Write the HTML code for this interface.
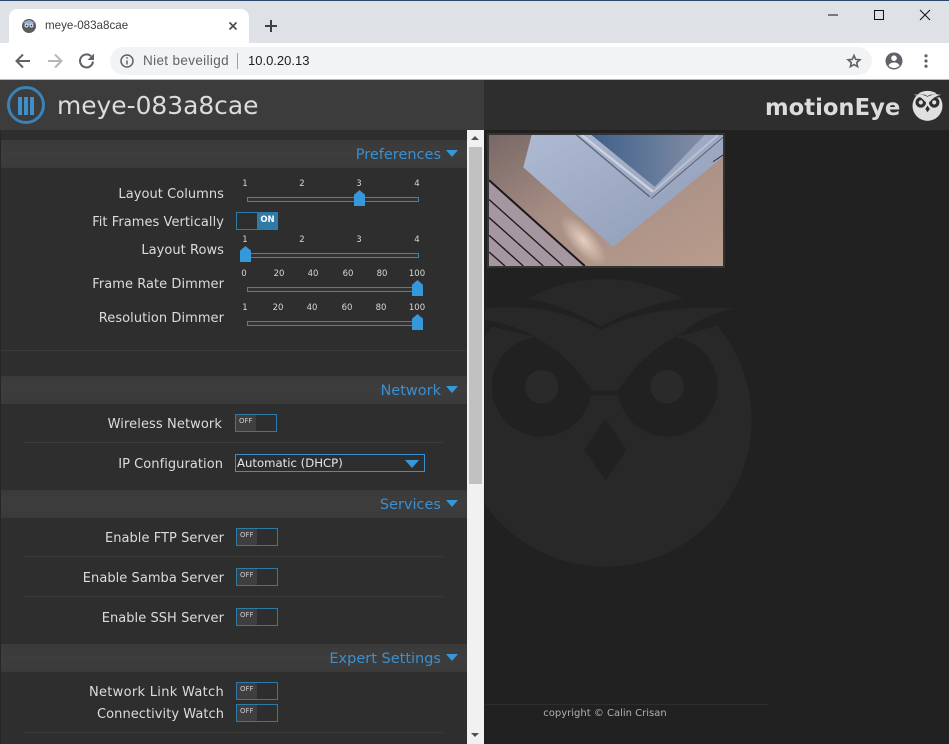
<!DOCTYPE html>
<html><head><meta charset="utf-8"><title>meye-083a8cae</title>
<style>
html,body{margin:0;padding:0;background:#212121}
body{width:949px;height:744px;position:relative;overflow:hidden;font-family:"DejaVu Sans",sans-serif}
div,span,svg{position:absolute;display:block}
.h{left:1px;width:466px;height:28px;background:linear-gradient(#3a3a3a,#3d3d3d 50%,#3a3a3a)}
.ht{right:508px;height:28px;line-height:31px;font-size:14.5px;color:#3a8fd0;white-space:nowrap;width:auto}
.tri{left:446px;width:0;height:0;border-left:6.5px solid transparent;border-right:6.5px solid transparent;border-top:7.5px solid #3498db}
.l{right:725px;height:20px;line-height:20px;font-size:13px;color:#dcdcdc;white-space:nowrap;letter-spacing:.05px}
.sep{height:1px;left:24px;width:419px;background:#3c3c3c}
.tr{left:247px;width:170px;height:3px;border:1px solid #3a85b8;background:#333}
.th{width:11px;height:16px;background:#3498db;clip-path:polygon(50% 0,100% 30%,100% 100%,0 100%,0 30%)}
.tk{font-size:8.5px;line-height:10px;color:#d8d8d8;width:30px;text-align:center}
.tg{width:40px;height:16px;border:1px solid #317aa8;background:#2e2e2e}
.tg i{position:absolute;left:0;top:0;width:20px;height:16px;background:#3f3f3f;color:#ccc;font:normal 7px/13px "DejaVu Sans",sans-serif;text-indent:3px}
</style></head><body>

<!-- browser chrome -->
<div style="left:0;top:0;width:949px;height:1px;background:#2c4667"></div>
<div style="left:0;top:1px;width:949px;height:42px;background:#dee1e6"></div>
<div style="left:9px;top:9px;width:240px;height:34px;background:#fff;border-radius:8px 8px 0 0"></div>
<div style="left:0;top:43px;width:949px;height:36px;background:#fff"></div>
<div style="left:0;top:79px;width:949px;height:1px;background:#b8b8b8"></div>
<div style="left:110px;top:47px;width:762px;height:28px;border-radius:14px;background:#f1f3f4"></div>
<div style="left:45px;top:18px;font:11.6px/16px 'Liberation Sans',sans-serif;color:#3c4043;white-space:nowrap">meye-083a8cae</div>
<div style="left:143px;top:53px;font:13.5px/16px 'Liberation Sans',sans-serif;color:#5f6368;white-space:nowrap;letter-spacing:.35px">Niet beveiligd</div>
<div style="left:237px;top:53px;width:1px;height:16px;background:#9aa0a6"></div>
<div style="left:248px;top:53px;font:13px/16px 'Liberation Sans',sans-serif;color:#202124;white-space:nowrap">10.0.20.13</div>

<svg style="left:0;top:0" width="949" height="80" viewBox="0 0 949 80">
 <!-- favicon -->
 <circle cx="29" cy="26" r="7" fill="#5b5b5b"/>
 <path d="M23.5 23Q29 17.5 34.5 23L29 25Z" fill="#8fb0d8"/>
 <circle cx="26.5" cy="25.5" r="2" fill="#dfe6f2"/><circle cx="31.5" cy="25.5" r="2" fill="#dfe6f2"/>
 <circle cx="26.5" cy="25.5" r=".9" fill="#333"/><circle cx="31.5" cy="25.5" r=".9" fill="#333"/>
 <!-- tab close / new tab -->
 <path d="M229.5 22.5l7 7m0-7l-7 7" stroke="#45494d" stroke-width="1.6" fill="none"/>
 <path d="M271 20v12M265 26h12" stroke="#3c4043" stroke-width="2" fill="none"/>
 <!-- nav -->
 <path d="M30 61H17M23 54.5L16.5 61l6.500 6.500" stroke="#5f6368" stroke-width="2" fill="none"/>
 <path d="M48 61h13M55 54.5L61.5 61 55 67.5" stroke="#b4b7ba" stroke-width="2" fill="none"/>
 <path d="M93 61.5a6.500 6.500 0 1 1-1.900-5.200" stroke="#5f6368" stroke-width="2" fill="none"/>
 <path d="M94 53.5v6.500h-6.500z" fill="#5f6368"/>
 <circle cx="127" cy="61" r="6" stroke="#5f6368" stroke-width="1.5" fill="none"/>
 <path d="M127 60.5v4M127 57.2v1.500" stroke="#5f6368" stroke-width="1.5"/>
 <!-- star -->
 <path d="M854 55.5l1.700 3.900 4.200.4-3.200 2.800.9 4.100-3.600-2.100-3.600 2.100.9-4.100-3.200-2.800 4.200-.4z" stroke="#5f6368" stroke-width="1.6" fill="none"/>
 <!-- profile -->
 <circle cx="894" cy="61" r="8.5" fill="#5f6368"/>
 <circle cx="894" cy="58.2" r="2.8" fill="#fff"/>
 <path d="M888.5 65.5c1-2.200 3.200-3 5.500-3s4.500.8 5.500 3c-1.300 1.600-3.300 2.500-5.500 2.500s-4.200-.9-5.500-2.500z" fill="#fff"/>
 <!-- dots -->
 <circle cx="926" cy="55.8" r="1.6" fill="#5f6368"/><circle cx="926" cy="61" r="1.6" fill="#5f6368"/><circle cx="926" cy="66.2" r="1.6" fill="#5f6368"/>
 <!-- window controls -->
 <path d="M828 15h10" stroke="#111" stroke-width="1" fill="none"/>
 <rect x="874.5" y="10.5" width="9" height="9" stroke="#111" stroke-width="1" fill="none"/>
 <path d="M920 10l10 10m0-10l-10 10" stroke="#111" stroke-width="1" fill="none"/>
</svg>

<!-- page -->
<div style="left:0;top:80px;width:484px;height:50px;background:#3c3c3c"></div>
<div style="left:484px;top:80px;width:465px;height:50px;background:#2e2e2e"></div>
<div style="left:484px;top:130px;width:465px;height:614px;background:#212121"></div>

<svg style="left:7px;top:86px" width="38" height="38" viewBox="0 0 38 38">
 <circle cx="19" cy="19" r="17.5" stroke="#3a82b8" stroke-width="3" fill="none"/>
 <rect x="11" y="11" width="4" height="18" fill="#3f8fca"/><rect x="17" y="11" width="4" height="18" fill="#3f8fca"/><rect x="23" y="11" width="4" height="18" fill="#3f8fca"/>
</svg>
<div style="left:57px;top:89px;font-size:24.9px;line-height:34px;color:#dcdcdc;white-space:nowrap">meye-083a8cae</div>
<div style="left:765px;top:91px;font-size:22.7px;line-height:34px;font-weight:bold;color:#dcdcdc;white-space:nowrap">motionEye</div>

<svg style="left:912px;top:90px" width="31" height="31" viewBox="-10 0 880 880">
 <circle cx="430" cy="450" r="425" fill="#e0e0e0"/>
 <path d="M-20 130H880V200L430 240Z" fill="#2e2e2e"/>
 <path d="M190 85Q430-30 670 85Q530 110 430 175Q330 110 190 85Z" fill="#e0e0e0"/>
 <circle cx="240" cy="350" r="150" fill="#2e2e2e"/><circle cx="620" cy="350" r="150" fill="#2e2e2e"/>
 <path d="M40 135Q280 110 430 190Q580 110 820 135Q620 170 470 360H390Q240 170 40 135Z" fill="#e0e0e0"/>
 <circle cx="240" cy="350" r="60" fill="#e0e0e0"/><circle cx="620" cy="350" r="60" fill="#e0e0e0"/>
 <path d="M430 445L495 540 430 630 368 540Z" fill="#2e2e2e"/>
</svg>

<!-- owl watermark -->
<svg style="left:485px;top:270px" width="300" height="300" viewBox="0 0 900 900">
 <circle cx="360" cy="450" r="440" fill="#282828"/>
 <path d="M-10 0H900V170L700 165 600 195 350 240 125 195 0 165Z" fill="#212121"/>
 <path d="M130 85Q350-30 595 85Q450 110 348 170Q250 110 130 85Z" fill="#282828"/>
 <circle cx="170" cy="350" r="150" fill="#212121"/><circle cx="548" cy="350" r="150" fill="#212121"/>
 <path d="M0 115Q200 95 348 180Q500 100 750 115Q650 135 590 190Q470 250 400 360H320Q250 250 130 190Q70 160 0 150Z" fill="#282828"/>
 <rect x="318" y="362" width="84" height="14" fill="#212121"/>
 <rect x="318" y="376" width="84" height="40" fill="#282828"/>
 <circle cx="170" cy="350" r="50" fill="#2a2a2a"/><circle cx="546" cy="350" r="50" fill="#2a2a2a"/>
 <path d="M360 445L425 540 362 632 298 540Z" fill="#212121"/>
</svg>

<!-- camera frame -->
<div style="left:487px;top:133px;width:238px;height:135px;background:#333"></div>
<svg style="left:489px;top:135px" width="234" height="131" viewBox="12 15 703 392" preserveAspectRatio="none">
 <defs>
  <linearGradient id="a" x1="0" y1="0" x2="1" y2="1"><stop offset="0" stop-color="#786866"/><stop offset=".45" stop-color="#a88f85"/><stop offset="1" stop-color="#b89c8c"/></linearGradient>
  <linearGradient id="b" x1="0" y1="0" x2="1" y2="1"><stop offset="0" stop-color="#aeb9d2"/><stop offset="1" stop-color="#8e9bb6"/></linearGradient>
  <linearGradient id="c" x1="0" y1="0" x2="1" y2="0"><stop offset="0" stop-color="#3f608a"/><stop offset="1" stop-color="#838ea6"/></linearGradient>
  <radialGradient id="g"><stop offset="0" stop-color="#e4cfbe"/><stop offset="1" stop-color="#e4cfbe" stop-opacity="0"/></radialGradient>
 </defs>
 <rect x="12" y="15" width="703" height="392" fill="url(#a)"/>
 <path d="M115 112L140 15H715V80L385 350Z" fill="url(#b)"/>
 <path d="M320 15H660L510 170Z" fill="url(#c)"/>
 <path d="M275 15L495 200" stroke="#5a6478" stroke-width="4" fill="none"/>
 <path d="M290 15L505 185" stroke="#cdd3df" stroke-width="7" fill="none"/>
 <path d="M500 205L715 22" stroke="#5a6070" stroke-width="3" fill="none"/>
 <path d="M505 185L700 15" stroke="#b8c0d2" stroke-width="6" fill="none"/>
 <path d="M12 150V407H300Z" fill="#a596a0"/>
 <path d="M12 150L300 407" stroke="#1c181c" stroke-width="6" fill="none"/>
 <path d="M12 208L235 407" stroke="#1c181c" stroke-width="4" fill="none"/>
 <path d="M12 262L175 407" stroke="#1c181c" stroke-width="4" fill="none"/>
 <path d="M12 315L115 407" stroke="#1c181c" stroke-width="4" fill="none"/>
 <path d="M12 365L60 407" stroke="#1c181c" stroke-width="4" fill="none"/>
 <ellipse cx="295" cy="330" rx="95" ry="38" transform="rotate(48 295 330)" fill="url(#g)"/>
 <path d="M685 95L715 75" stroke="#2a2a2e" stroke-width="3" fill="none"/>
</svg>

<div style="left:485px;top:704px;width:283px;height:1px;background:#2e2e2e"></div>
<div style="left:485px;top:707px;width:240px;text-align:center;font-size:10px;line-height:14px;color:#b0b0b0;white-space:nowrap">copyright © Calin Crisan</div>

<!-- settings panel -->
<div style="left:0;top:130px;width:467px;height:614px;background:#2e2e2e"></div>
<div style="left:0;top:130px;width:1px;height:614px;background:#262626"></div>

<!-- scrollbar -->
<div style="left:467px;top:130px;width:17px;height:614px;background:#f1f1f1"></div>
<div style="left:469px;top:147px;width:13px;height:337px;background:#c1c1c1"></div>
<div style="left:471px;top:136px;width:0;height:0;border-left:4px solid transparent;border-right:4px solid transparent;border-bottom:4px solid #505050"></div>
<div style="left:471px;top:733px;width:0;height:0;border-left:4px solid transparent;border-right:4px solid transparent;border-top:4px solid #505050"></div>

<!-- Preferences -->
<div class="h" style="top:140px"></div>
<div class="ht" style="top:140px">Preferences</div>
<div class="tri" style="top:150px"></div>

<div class="l" style="top:185px">Layout Columns</div>
<div class="tk" style="left:230px;top:179px">1</div><div class="tk" style="left:287px;top:179px">2</div><div class="tk" style="left:344px;top:179px">3</div><div class="tk" style="left:402px;top:179px">4</div>
<div class="tr" style="top:197px"></div><div class="th" style="left:354px;top:190px"></div>

<div class="l" style="top:213px">Fit Frames Vertically</div>
<div class="tg" style="left:236px;top:212px;background:#2e2e2e"></div>
<div style="left:257px;top:212px;width:21px;height:18px;background:#317aa8;color:#fff;font:bold 8.5px/17px 'DejaVu Sans',sans-serif;text-align:center">ON</div>

<div class="l" style="top:241px">Layout Rows</div>
<div class="tk" style="left:230px;top:235px">1</div><div class="tk" style="left:287px;top:235px">2</div><div class="tk" style="left:344px;top:235px">3</div><div class="tk" style="left:402px;top:235px">4</div>
<div class="tr" style="top:253px"></div><div class="th" style="left:240px;top:246px"></div>

<div class="l" style="top:275px">Frame Rate Dimmer</div>
<div class="tk" style="left:229px;top:269px">0</div><div class="tk" style="left:264px;top:269px">20</div><div class="tk" style="left:298px;top:269px">40</div><div class="tk" style="left:333px;top:269px">60</div><div class="tk" style="left:367px;top:269px">80</div><div class="tk" style="left:402px;top:269px">100</div>
<div class="tr" style="top:287px"></div><div class="th" style="left:412px;top:280px"></div>

<div class="l" style="top:309px">Resolution Dimmer</div>
<div class="tk" style="left:230px;top:303px">1</div><div class="tk" style="left:263px;top:303px">20</div><div class="tk" style="left:297px;top:303px">40</div><div class="tk" style="left:332px;top:303px">60</div><div class="tk" style="left:366px;top:303px">80</div><div class="tk" style="left:402px;top:303px">100</div>
<div class="tr" style="top:321px"></div><div class="th" style="left:412px;top:314px"></div>

<div style="left:1px;top:350px;width:466px;height:1px;background:#3a3a3a"></div>

<!-- Network -->
<div class="h" style="top:376px"></div>
<div class="ht" style="top:376px">Network</div>
<div class="tri" style="top:386px"></div>
<div class="l" style="top:415px;right:727px;letter-spacing:.1px">Wireless Network</div>
<div class="tg" style="left:235px;top:414px"><i>OFF</i></div>
<div class="sep" style="top:442px"></div>
<div class="l" style="top:455px;right:726px">IP Configuration</div>
<div style="left:235px;top:454px;width:188px;height:16px;border:1px solid #3a8fd0;background:#2e2e2e;color:#e6e6e6;font-size:11.7px;line-height:16px;text-indent:1px;white-space:nowrap">Automatic (DHCP)</div>
<div style="left:405px;top:460px;width:0;height:0;border-left:7px solid transparent;border-right:7px solid transparent;border-top:8px solid #3498db"></div>

<!-- Services -->
<div class="h" style="top:490px"></div>
<div class="ht" style="top:490px">Services</div>
<div class="tri" style="top:500px"></div>
<div class="l" style="top:529px">Enable FTP Server</div>
<div class="tg" style="left:236px;top:528px"><i>OFF</i></div>
<div class="sep" style="top:556px"></div>
<div class="l" style="top:569px">Enable Samba Server</div>
<div class="tg" style="left:236px;top:568px"><i>OFF</i></div>
<div class="sep" style="top:596px"></div>
<div class="l" style="top:609px">Enable SSH Server</div>
<div class="tg" style="left:236px;top:608px"><i>OFF</i></div>

<!-- Expert -->
<div class="h" style="top:644px"></div>
<div class="ht" style="top:644px">Expert Settings</div>
<div class="tri" style="top:654px"></div>
<div class="l" style="top:683px;letter-spacing:.3px">Network Link Watch</div>
<div class="tg" style="left:236px;top:682px"><i>OFF</i></div>
<div class="l" style="top:705px">Connectivity Watch</div>
<div class="tg" style="left:236px;top:704px"><i>OFF</i></div>
<div class="sep" style="top:732px"></div>

<div style="display:none"></div>
</body></html>
